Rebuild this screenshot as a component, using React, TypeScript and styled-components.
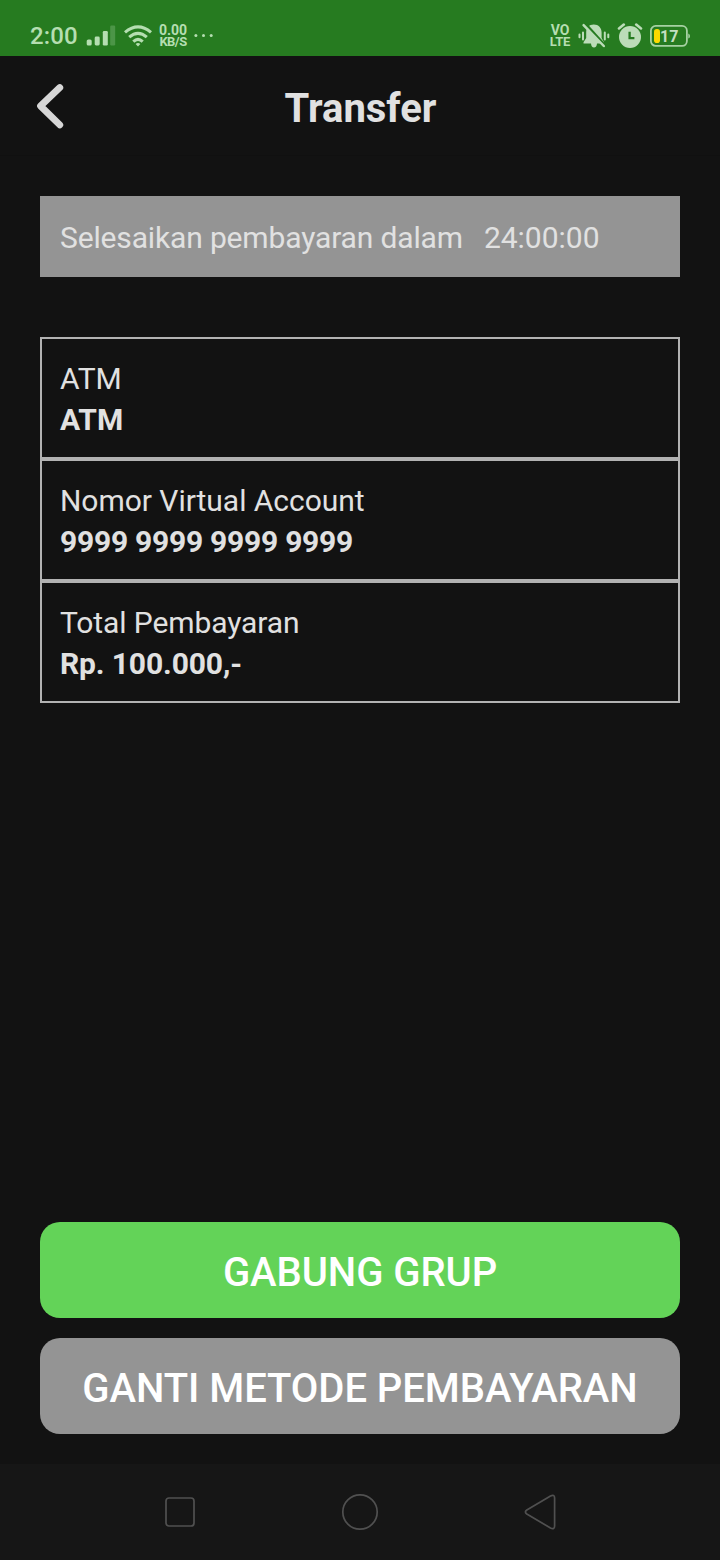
import React from "react";
import styled, { createGlobalStyle } from "styled-components";

const GlobalStyle = createGlobalStyle`
  * { box-sizing: border-box; }
  body { margin: 0; background: #121212; }
`;

const Screen = styled.div`
  width: 720px;
  height: 1560px;
  display: flex;
  flex-direction: column;
  background: #121212;
  color: #e1e1e1;
  font-family: Roboto, "Liberation Sans", sans-serif;
`;

const StatusBar = styled.div`
  height: 56px;
  flex: none;
  display: flex;
  justify-content: space-between;
  padding: 16px 30px 0 30px;
  background: #267b20;
  color: #b5deb1;
`;

const StatusGroup = styled.div<{ $gap: number }>`
  display: flex;
  align-items: center;
  height: 40px;
  gap: ${(p) => p.$gap}px;
  svg { display: block; flex: none; }
`;

const Clock = styled.span`
  width: 48px;
  font-size: 24px;
  line-height: 42px;
  font-weight: 500;
  white-space: nowrap;
  letter-spacing: 0.1px;
`;

const StackedLabel = styled.span<{ $width: number; $spacing: number }>`
  width: ${(p) => p.$width}px;
  display: flex;
  flex-direction: column;
  align-items: center;
  font-size: 13px;
  font-weight: 700;
  line-height: 12px;
  white-space: nowrap;
  span:first-child { font-size: 14px; }
  span:last-child { letter-spacing: ${(p) => p.$spacing}px; }
`;

const Header = styled.header`
  height: 100px;
  flex: none;
  display: grid;
  grid-template-columns: 100px 1fr 100px;
  align-items: center;
  border-bottom: 1px solid #101010;
`;

const BackButton = styled.button`
  display: flex;
  width: 40px;
  height: 56px;
  margin-left: 30px;
  padding: 0;
  border: 0;
  background: none;
  color: #d6d6d6;
`;

const Title = styled.h1`
  margin: 7px 0 0 1px;
  text-align: center;
  font-size: 40px;
  line-height: 52px;
  font-weight: 700;
`;

const Content = styled.main`
  flex: 1;
  display: flex;
  flex-direction: column;
  padding: 40px 40px 30px;
`;

const Countdown = styled.div`
  display: flex;
  gap: 21px;
  height: 81px;
  padding: 21px 20px 19px;
  background: #949494;
  font-size: 30px;
  line-height: 41px;
  span:first-child { letter-spacing: -0.15px; }
`;

const Details = styled.dl`
  margin: 60px 0 0;
`;

const DetailRow = styled.div`
  height: 122px;
  padding: 19px 18px 17px;
  border: 2px solid #b2b2b2;
  font-size: 30px;
  line-height: 41px;
`;

const Label = styled.dt<{ $spacing: number }>`
  letter-spacing: ${(p) => p.$spacing}px;
`;

const Value = styled.dd<{ $spacing: number }>`
  margin: 0;
  font-weight: 700;
  letter-spacing: ${(p) => p.$spacing}px;
`;

const Actions = styled.div`
  display: flex;
  flex-direction: column;
  gap: 20px;
  margin-top: auto;
`;

const ActionButton = styled.button<{ $color: string }>`
  height: 96px;
  padding: 6px 0 0;
  border: 0;
  border-radius: 20px;
  background: ${(p) => p.$color};
  color: #fff;
  font: 500 40px/52px Roboto, "Liberation Sans", sans-serif;
  letter-spacing: -0.06px;
`;

const NavBar = styled.nav`
  height: 96px;
  flex: none;
  display: flex;
  justify-content: center;
  align-items: center;
  gap: 140px;
  background: #161616;
  svg { display: block; }
`;

const details = [
  { label: "ATM", value: "ATM", labelSpacing: 0, valueSpacing: 0 },
  { label: "Nomor Virtual Account", value: "9999 9999 9999 9999", labelSpacing: -0.03, valueSpacing: -0.25 },
  { label: "Total Pembayaran", value: "Rp. 100.000,-", labelSpacing: -0.1, valueSpacing: -0.12 },
];

const SignalIcon = () => (
  <svg width="30" height="22" viewBox="0 0 30 22" fill="#b5deb1">
    <rect x="0.7" y="14.5" width="5" height="6" rx="1.6" />
    <rect x="8.7" y="11.5" width="5" height="9" rx="1.4" />
    <rect x="16.8" y="6" width="5" height="14.5" rx="1.2" />
    <rect x="24.2" y="0.5" width="5" height="20" rx="1.2" opacity="0.27" />
  </svg>
);

const WifiIcon = () => (
  <svg width="28" height="22" viewBox="0 0 28 22" fill="none" stroke="#b5deb1" strokeWidth="3.1">
    <path d="M1 7.4Q14-3.5 27 7.4" />
    <path d="M5.2 12.2Q14 4.5 22.8 12.2" />
    <path d="M9.3 16.6Q14 12.2 18.7 16.6" />
    <path d="M11.6 19Q14 17.2 16.4 19L14 21.6Z" fill="#b5deb1" stroke="none" />
  </svg>
);

const DotsIcon = () => (
  <svg width="20" height="4" viewBox="0 0 20 4" fill="#b5deb1">
    <circle cx="1.9" cy="1.6" r="1.5" />
    <circle cx="9.5" cy="1.6" r="1.5" />
    <circle cx="17.2" cy="1.6" r="1.5" />
  </svg>
);

const MuteIcon = () => (
  <svg width="32" height="26" viewBox="0 0 32 26">
    <path
      d="M15.8 1.5C11 1.5 8.2 5 8.2 9.5V15L5.5 19.3V20.6H13Q13.3 24.5 16 24.5Q18.7 24.5 19 20.6H26V19.3L23.6 15V9.5C23.6 5 20.6 1.5 15.8 1.5Z"
      fill="#bcdcb8"
    />
    <path d="M7.8 1.2L27 22.4" stroke="#267b20" strokeWidth="2.6" />
    <path d="M5.6 2.2L25.8 23" stroke="#bcdcb8" strokeWidth="2.5" strokeLinecap="round" />
    <path
      d="M1.5 11.4V14.2M5 9.4V16.5M26.8 9.4V16.5M30.3 11.4V14.2"
      stroke="#bcdcb8"
      strokeWidth="2"
      strokeLinecap="round"
    />
  </svg>
);

const AlarmIcon = () => (
  <svg width="26" height="26" viewBox="0 0 26 26" fill="none">
    <circle cx="13" cy="14" r="11" fill="#bcdcb8" />
    <path d="M2 5.4L6.8 1.6M24 5.4L19.2 1.6" stroke="#bcdcb8" strokeWidth="2.6" strokeLinecap="round" />
    <path d="M12.6 8.8V15.1H17.4" stroke="#267b20" strokeWidth="2.3" />
  </svg>
);

const BatteryIcon = () => (
  <svg width="40" height="22" viewBox="0 0 40 22">
    <rect x="0.9" y="0.9" width="36" height="20" rx="4.8" fill="none" stroke="#a7d1a3" strokeWidth="1.8" />
    <path d="M38.3 8.4Q40 9 40 11Q40 13 38.3 13.6Z" fill="#a7d1a3" />
    <rect x="4" y="4" width="6" height="14" rx="2.8" fill="#fbd900" />
    <text x="19.3" y="17" textAnchor="middle" fill="#c3dfc0" fontFamily="Roboto, sans-serif" fontSize="16" fontWeight="700">
      17
    </text>
  </svg>
);

export default function App() {
  return (
    <Screen>
      <GlobalStyle />
      <StatusBar>
        <StatusGroup $gap={8}>
          <Clock>2:00</Clock>
          <SignalIcon />
          <WifiIcon />
          <StackedLabel $width={26} $spacing={-0.55}>
            <span>0.00</span>
            <span>KB/S</span>
          </StackedLabel>
          <DotsIcon />
        </StatusGroup>
        <StatusGroup $gap={7}>
          <StackedLabel $width={22} $spacing={-0.1}>
            <span>VO</span>
            <span>LTE</span>
          </StackedLabel>
          <MuteIcon />
          <AlarmIcon />
          <BatteryIcon />
        </StatusGroup>
      </StatusBar>
      <Header>
        <BackButton aria-label="Kembali">
          <svg width="40" height="56" viewBox="0 0 40 56" fill="none" stroke="currentColor" strokeWidth="6.8" strokeLinecap="round">
            <path d="M29.8 9.5L10.5 28L29.8 46.9" strokeLinejoin="round" />
          </svg>
        </BackButton>
        <Title>Transfer</Title>
      </Header>
      <Content>
        <Countdown>
          <span>Selesaikan pembayaran dalam</span>
          <span>24:00:00</span>
        </Countdown>
        <Details>
          {details.map((d) => (
            <DetailRow key={d.label}>
              <Label $spacing={d.labelSpacing}>{d.label}</Label>
              <Value $spacing={d.valueSpacing}>{d.value}</Value>
            </DetailRow>
          ))}
        </Details>
        <Actions>
          <ActionButton $color="#63d358">GABUNG GRUP</ActionButton>
          <ActionButton $color="#949494">GANTI METODE PEMBAYARAN</ActionButton>
        </Actions>
      </Content>
      <NavBar>
        <svg width="40" height="40" viewBox="0 0 40 40" fill="none" stroke="#505050" strokeWidth="1.7">
          <rect x="6" y="6" width="28" height="28" rx="3" />
        </svg>
        <svg width="40" height="40" viewBox="0 0 40 40" fill="none" stroke="#505050" strokeWidth="1.7">
          <circle cx="20" cy="20" r="17.2" />
        </svg>
        <svg width="40" height="40" viewBox="0 0 40 40" fill="none" stroke="#505050" strokeWidth="1.7">
          <path d="M6.8 18Q4 20 6.8 22L30.5 36Q34.6 37.8 34.6 34V6Q34.6 2.2 30.5 4Z" strokeLinejoin="round" />
        </svg>
      </NavBar>
    </Screen>
  );
}
